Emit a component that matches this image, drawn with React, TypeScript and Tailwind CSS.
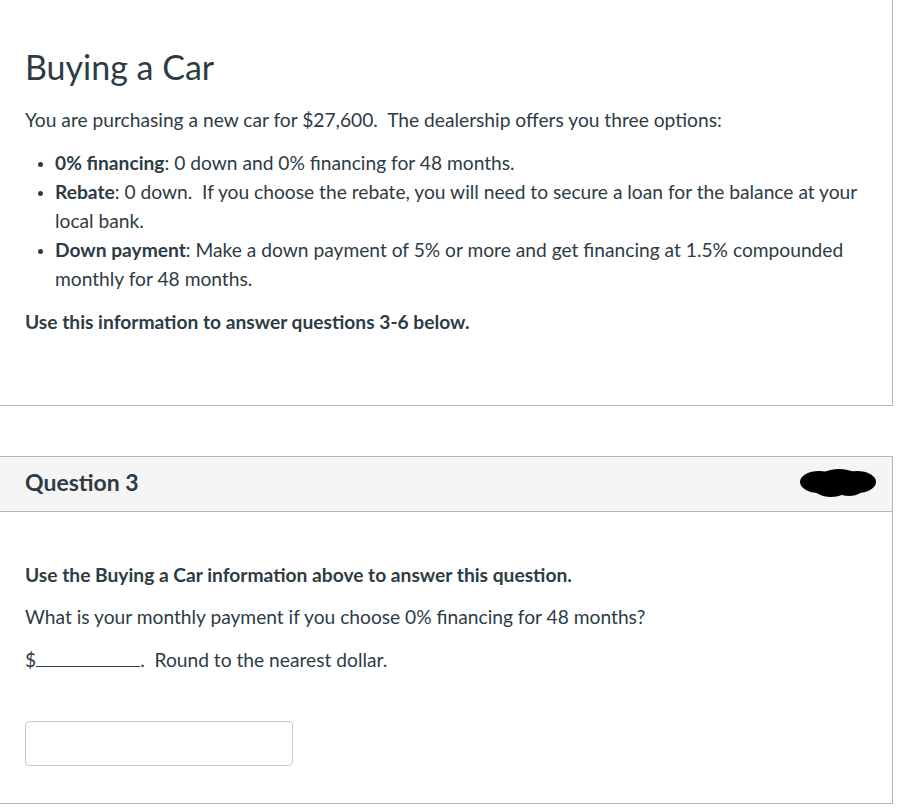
import React from "react";

function Redacted() {
  return (
    <svg width="78" height="30" viewBox="0 0 78 30" className="block">
      <ellipse cx="20" cy="14" rx="19" ry="11" fill="#000" />
      <ellipse cx="40" cy="13" rx="22" ry="12" fill="#000" />
      <ellipse cx="58" cy="14" rx="19" ry="11" fill="#000" />
      <ellipse cx="32" cy="19" rx="18" ry="10" fill="#000" />
      <ellipse cx="50" cy="18" rx="16" ry="10" fill="#000" />
    </svg>
  );
}

export default function App() {
  return (
    <div
      className="w-[900px] h-[808px] bg-white overflow-hidden text-[#2d3b45]"
      style={{ fontFamily: "Lato, 'Open Sans', sans-serif" }}
    >
      {/* intro block */}
      <div className="w-[893px] border-r border-b border-[#b5b5b5] pl-[25px] pr-6 pt-[46px] pb-[69px]">
        <h1 className="text-[34px] leading-[41px] font-normal">Buying a Car</h1>
        <p className="mt-[18px] text-[19.2px] leading-[29px]">
          You are purchasing a new car for $27,600.&nbsp; The dealership offers you three options:
        </p>
        <ul className="mt-[14px] text-[19.2px] leading-[29px] pl-[30px] list-disc marker:text-[15px]">
          <li>
            <strong className="font-bold">0% financing</strong>: 0 down and 0% financing for 48 months.
          </li>
          <li>
            <strong className="font-bold">Rebate</strong>: 0 down.&nbsp; If you choose the rebate, you will need to secure a loan for the balance at your local bank.
          </li>
          <li>
            <strong className="font-bold">Down payment</strong>: Make a down payment of 5% or more and get financing at 1.5% compounded monthly for 48 months.
          </li>
        </ul>
        <p className="mt-[14px] text-[19.2px] leading-[29px] font-bold">
          Use this information to answer questions 3-6 below.
        </p>
      </div>

      {/* question card */}
      <div className="mt-[50px] w-[893px] border-t border-r border-b border-[#b5b5b5]">
        <div className="h-[55px] bg-[#f5f5f5] border-b border-[#b5b5b5] flex items-center justify-between pl-[25px] pr-[15px] pb-[3px]">
          <h2 className="text-[23px] font-bold">Question 3</h2>
          <Redacted />
        </div>
        <div className="pl-[25px] pr-6 pt-[48px] pb-[37px] text-[19.2px] leading-[29px]">
          <p className="font-bold">Use the Buying a Car information above to answer this question.</p>
          <p className="mt-[13px]">What is your monthly payment if you choose 0% financing for 48 months?</p>
          <p className="mt-[14px]">
            $<span className="inline-block w-[104px] border-b border-[#2d3b45] align-baseline"></span>.&nbsp; Round to the nearest dollar.
          </p>
          <input
            type="text"
            className="mt-[47px] block w-[268px] h-[45px] border border-[#c8c8c8] rounded-[4px] bg-white"
          />
        </div>
      </div>
    </div>
  );
}
